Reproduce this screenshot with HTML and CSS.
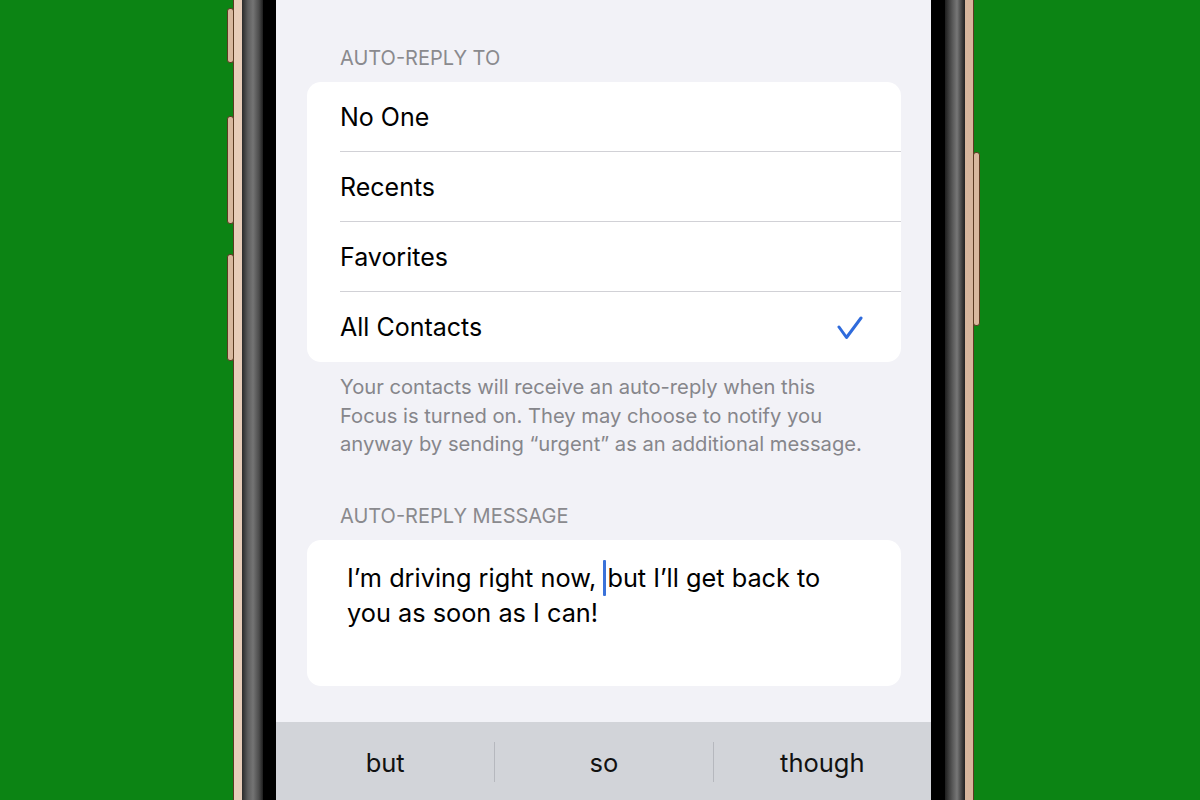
FILE: index.html
```html
<html>
<head>
<title>Focus</title>
<link rel="stylesheet" href="styles.css">
</head>
<body>
<div class="phone">
    <span class="side-btn mute"></span>
    <span class="side-btn vol-up"></span>
    <span class="side-btn vol-down"></span>
    <span class="side-btn power"></span>
    <div class="rim"><div class="bezel">
        <div class="screen">
            <div class="settings">
                <p class="group-title">AUTO-REPLY TO</p>
                <ul class="group">
                    <li class="row">No One</li>
                    <li class="row">Recents</li>
                    <li class="row">Favorites</li>
                    <li class="row">All Contacts
                        <svg class="check" width="26" height="24" viewBox="0 0 26 24">
                            <path d="M2 11 L9.5 21.5 L24 2" fill="none" stroke="#2f6bdc" stroke-width="3" stroke-linecap="round" stroke-linejoin="round"/>
                        </svg>
                    </li>
                </ul>
                <p class="group-note">Your contacts will receive an auto-reply when this<br>Focus is turned on. They may choose to notify you<br>anyway by sending &ldquo;urgent&rdquo; as an additional message.</p>
                <p class="group-title second">AUTO-REPLY MESSAGE</p>
                <div class="group message">I&rsquo;m driving right now, <span class="caret"></span>but I&rsquo;ll get back to<br>you as soon as I can!</div>
            </div>
            <div class="suggestions">
                <div class="word">but</div>
                <div class="word">so</div>
                <div class="word">though</div>
            </div>
        </div>
    </div></div>
</div>
</body>
</html>
```

FILE: styles.css
```css
body
{
    margin: 0;
    background-color: #0c8414;
    overflow: hidden;
    font-family: Inter, "Noto Sans", "Liberation Sans", sans-serif;
}
.phone
{
    position: relative;
    box-sizing: border-box;
    width: 741px;
    height: 800px;
    margin-left: 233px;
    padding: 0 8px;
    background: linear-gradient(to right, #e8cdb9, #d6b59c);
    border-left: 1px solid #5b3b22;
    border-right: 1px solid #5b3b22;
}
.side-btn
{
    position: absolute;
    width: 5px;
    background-color: #d8b89e;
    border: 1px solid #5b3b22;
    border-radius: 3px;
}
.mute { left: -7px; top: 8px; height: 53px; }
.vol-up { left: -7px; top: 116px; height: 106px; }
.vol-down { left: -7px; top: 254px; height: 105px; }
.power { right: -7px; top: 152px; height: 172px; }
.rim
{
    height: 100%;
    padding: 0 20px 0 21px;
    background: linear-gradient(to right,
        #2a2a2a 0, #5e5e5e 6px, #747474 11px, #4c4c4c 17px, #1e1e1e 21px,
        #000 21px, #000 calc(100% - 20px),
        #1e1e1e calc(100% - 20px), #555 calc(100% - 13px), #777 calc(100% - 8px), #333 calc(100% - 2px), #222 100%);
}
.bezel
{
    height: 100%;
    padding: 0 14px 0 13px;
    background-color: #000;
}
.screen
{
    height: 100%;
    display: flex;
    flex-direction: column;
    background-color: #f2f2f7;
}
.settings
{
    flex: 1;
    padding: 46px 30px 0 31px;
}
.group-title
{
    margin: 0 0 12px;
    padding-left: 33px;
    font-size: 20px;
    line-height: 24px;
    color: #8a8a8e;
}
.second
{
    margin-top: 45px;
    margin-bottom: 12px;
}
.group
{
    margin: 0;
    padding: 0;
    list-style: none;
    background-color: #fff;
    border-radius: 14px;
}
.row
{
    height: 70px;
    margin-left: 33px;
    padding-right: 38px;
    display: flex;
    align-items: center;
    justify-content: space-between;
    font-size: 25px;
    color: #000;
    box-shadow: inset 0 -1px 0 #d1d1d6;
}
.row:last-child
{
    box-shadow: none;
}
.check
{
    margin-top: 2px;
}
.group-note
{
    margin: 11px 0 0;
    padding-left: 33px;
    font-size: 20.2px;
    line-height: 28.5px;
    color: #86868b;
}
.message
{
    box-sizing: border-box;
    height: 146px;
    padding: 20px 20px 0 40px;
    font-size: 25.3px;
    line-height: 34px;
    color: #000;
}
.caret
{
    display: inline-block;
    width: 3px;
    height: 36px;
    margin-right: 1px;
    vertical-align: -9px;
    background-color: #3a72d9;
    border-radius: 1px;
}
.suggestions
{
    height: 78px;
    display: grid;
    grid-template-columns: 1fr 1fr 1fr;
    background-color: #d2d4d9;
}
.word
{
    height: 40px;
    margin-top: 20px;
    display: flex;
    align-items: center;
    justify-content: center;
    font-size: 25.5px;
    color: #111;
}
.word + .word
{
    border-left: 1px solid #b6b8be;
}
```
